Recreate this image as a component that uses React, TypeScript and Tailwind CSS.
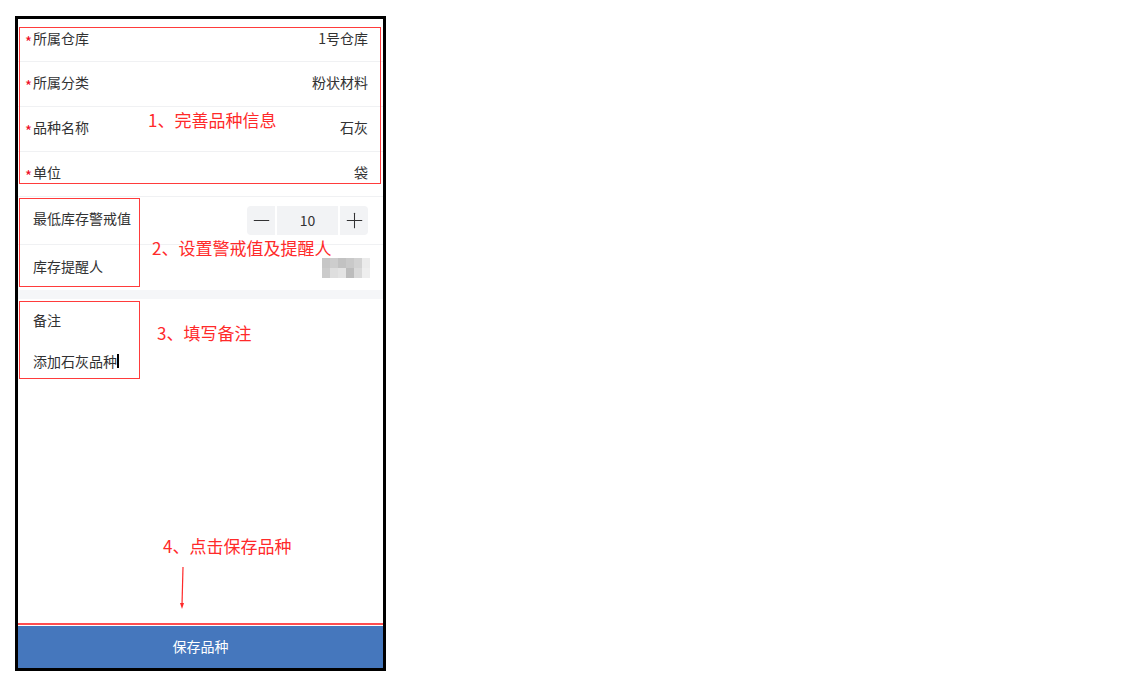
import { Minus, Plus } from 'lucide-react'

const font = { fontFamily: '"Noto Sans CJK SC", "Noto Sans", sans-serif' }

const required = [
  { label: '所属仓库', value: '1号仓库', h: 'h-[43px]' },
  { label: '所属分类', value: '粉状材料', h: 'h-[45px]' },
  { label: '品种名称', value: '石灰', h: 'h-[45px]' },
  { label: '单位', value: '袋', h: 'h-[45px]' },
]

const mosaic = [
  '#c6c6c6', '#cdcdcd', '#c2c2c2', '#c9c9c9', '#d2d2d2', '#ebebeb',
  '#cbcbcb', '#dedede', '#e3e3e3', '#bcbcbc', '#d9d9d9', '#eeeeee',
]

const Note = ({ className, children }: { className: string; children: string }) => (
  <div className={`absolute text-[17px] leading-[24px] text-[#ff2a2a] whitespace-nowrap ${className}`}>
    {children}
  </div>
)

export default function App() {
  return (
    <div className="w-[1129px] h-[691px] bg-white pt-[16px] pl-[15px]" style={font}>
      <div className="w-[371px] h-[655px] border-[3px] border-black">
        <div className="relative w-[365px] h-[649px] bg-white flex flex-col text-[14px] text-[#323233]">
          {required.map((r) => (
            <div key={r.label} className={`${r.h} flex items-center justify-between pl-[7px] pr-[15px] pb-[3px] border-b border-[#f0f1f3]`}>
              <div className="flex items-center">
                <span className="relative top-[3px] w-[8px] text-[15px] leading-[20px] text-[#ee0a24]">*</span>
                <span>{r.label}</span>
              </div>
              <span>{r.value}</span>
            </div>
          ))}

          <div className="h-[48px] flex items-center justify-between pl-[15px] pr-[15px] border-b border-[#f0f1f3]">
            <span className="relative -top-[2px]">最低库存警戒值</span>
            <div className="flex items-center gap-[2px]">
              <div className="w-[28px] h-[29px] rounded-l-[4px] bg-[#f2f3f5] flex items-center justify-center">
                <Minus className="w-[25px] h-[25px] text-[#323233]" strokeWidth={1} />
              </div>
              <div className="w-[61px] h-[29px] bg-[#f2f3f5] flex items-center justify-center">10</div>
              <div className="w-[28px] h-[29px] rounded-r-[4px] bg-[#f2f3f5] flex items-center justify-center">
                <Plus className="w-[25px] h-[25px] text-[#323233]" strokeWidth={1} />
              </div>
            </div>
          </div>

          <div className="h-[45px] flex items-center justify-between pl-[15px] pr-[13px]">
            <span className="relative -top-[1px]">库存提醒人</span>
            <div className="grid grid-cols-6 w-[48px] h-[20px]">
              {mosaic.map((c, i) => (
                <div key={i} style={{ backgroundColor: c }} />
              ))}
            </div>
          </div>

          <div className="h-[9px] bg-[#f5f6f8]" />

          <div className="pt-[9px] px-[15px]">
            <div className="leading-[24px]">备注</div>
            <div className="mt-[17px] leading-[24px] flex items-center">
              <span>添加石灰品种</span>
              <span className="w-[2px] h-[14px] bg-black" />
            </div>
          </div>

          <div className="flex-1" />
          <div className="h-[2px] bg-[#ff4d4f]" />
          <div className="h-[1px] bg-white" />
          <div className="h-[42px] bg-[#4577bd] flex items-center justify-center text-white pb-[1px]">保存品种</div>

          {/* annotation boxes */}
          <div className="absolute left-[1px] top-[8px] w-[362px] h-[157px] border border-[#ff3b3b]" />
          <div className="absolute left-[1px] top-[179px] w-[121px] h-[89px] border border-[#ff3b3b]" />
          <div className="absolute left-[1px] top-[282px] w-[121px] h-[78px] border border-[#ff3b3b]" />

          <Note className="left-[130px] top-[89px]">1、完善品种信息</Note>
          <Note className="left-[134px] top-[217px]">2、设置警戒值及提醒人</Note>
          <Note className="left-[139px] top-[302px]">3、填写备注</Note>
          <Note className="left-[145px] top-[515px]">4、点击保存品种</Note>

          <svg className="absolute left-[158px] top-[546px]" width="12" height="46" viewBox="0 0 12 46">
            <line x1="7" y1="2" x2="6" y2="40" stroke="#ff2a2a" strokeWidth="1.2" />
            <path d="M4 38 L6 44 L8 38 Z" fill="#ff2a2a" />
          </svg>
        </div>
      </div>
    </div>
  )
}
